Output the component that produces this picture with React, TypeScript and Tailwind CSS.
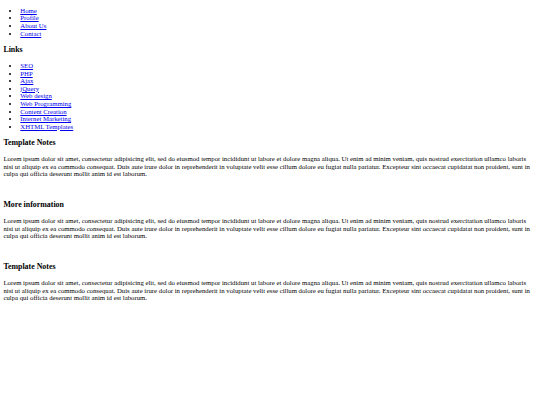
import React from 'react';

const nav = ['Home', 'Profile', 'About Us', 'Contact'];
const links = ['SEO', 'PHP', 'Ajax', 'jQuery', 'Web design', 'Web Programming', 'Content Creation', 'Internet Marketing', 'XHTML Templates'];

const lorem =
  'Lorem ipsum dolor sit amet, consectetur adipisicing elit, sed do eiusmod tempor incididunt ut labore et dolore magna aliqua. Ut enim ad minim veniam, quis nostrud exercitation ullamco laboris nisi ut aliquip ex ea commodo consequat. Duis aute irure dolor in reprehenderit in voluptate velit esse cillum dolore eu fugiat nulla pariatur. Excepteur sint occaecat cupidatat non proident, sunt in culpa qui officia deserunt mollit anim id est laborum.';

const LinkList: React.FC<{ items: string[] }> = ({ items }) => (
  <ul className="list-disc pl-[16.9px] my-[6.75px]">
    {items.map((item) => (
      <li key={item}>
        <a href="#" className="text-[#0000ee] underline">
          {item}
        </a>
      </li>
    ))}
  </ul>
);

const Heading: React.FC<{ children: React.ReactNode }> = ({ children }) => (
  <h3 className="text-[7.9px] leading-[9.1px] font-bold my-[7.9px]">{children}</h3>
);

const Section: React.FC<{ title: string; spacer?: boolean }> = ({ title, spacer }) => (
  <>
    <Heading>{title}</Heading>
    <p className="my-[6.75px]">{lorem}</p>
    {spacer && <p className="my-[6.75px]">&nbsp;</p>}
  </>
);

export default function App() {
  return (
    <div className="bg-white text-black font-['Liberation_Serif',serif] text-[6.75px] leading-[7.6px] px-[3.4px] min-h-[405px] flow-root">
      <LinkList items={nav} />
      <Heading>Links</Heading>
      <LinkList items={links} />
      <Section title="Template Notes" spacer />
      <Section title="More information" spacer />
      <Section title="Template Notes" />
    </div>
  );
}
